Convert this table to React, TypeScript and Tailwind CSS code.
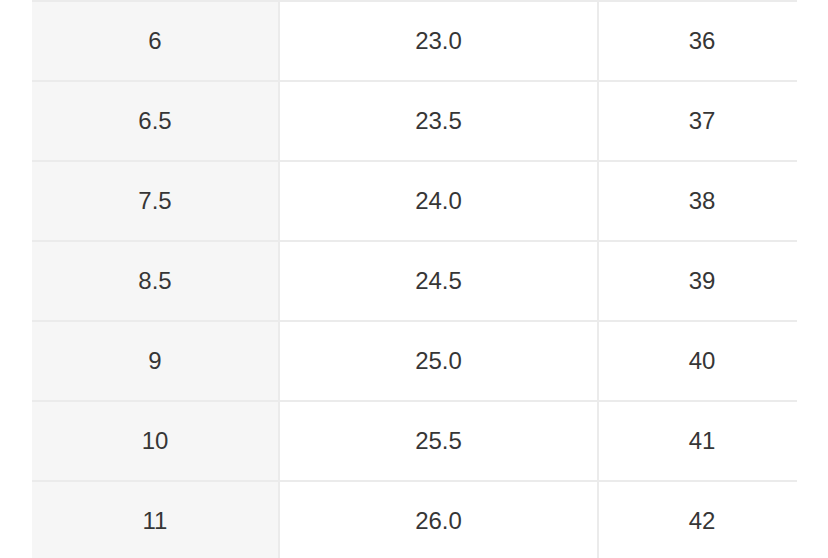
const rows = [
  ["6", "23.0", "36"],
  ["6.5", "23.5", "37"],
  ["7.5", "24.0", "38"],
  ["8.5", "24.5", "39"],
  ["9", "25.0", "40"],
  ["10", "25.5", "41"],
  ["11", "26.0", "42"],
];

export default function App() {
  return (
    <div className="bg-white h-[558px] overflow-hidden pl-[32px] w-[828px]" style={{ fontFamily: '"Liberation Sans", Arial, sans-serif' }}>
      <div className="w-[765px]">
        {rows.map((r, i) => (
          <div key={i} className="flex h-[80px] border-t-2 border-[#ebebeb] text-[24px] text-[#363636]">
            <div className="w-[246px] bg-[#f6f6f6] flex items-center justify-center">{r[0]}</div>
            <div className="w-[319px] border-l-2 border-[#ebebeb] flex items-center justify-center">{r[1]}</div>
            <div className="flex-1 border-l-2 border-[#ebebeb] flex items-center justify-center pl-[8px]">{r[2]}</div>
          </div>
        ))}
      </div>
    </div>
  );
}
